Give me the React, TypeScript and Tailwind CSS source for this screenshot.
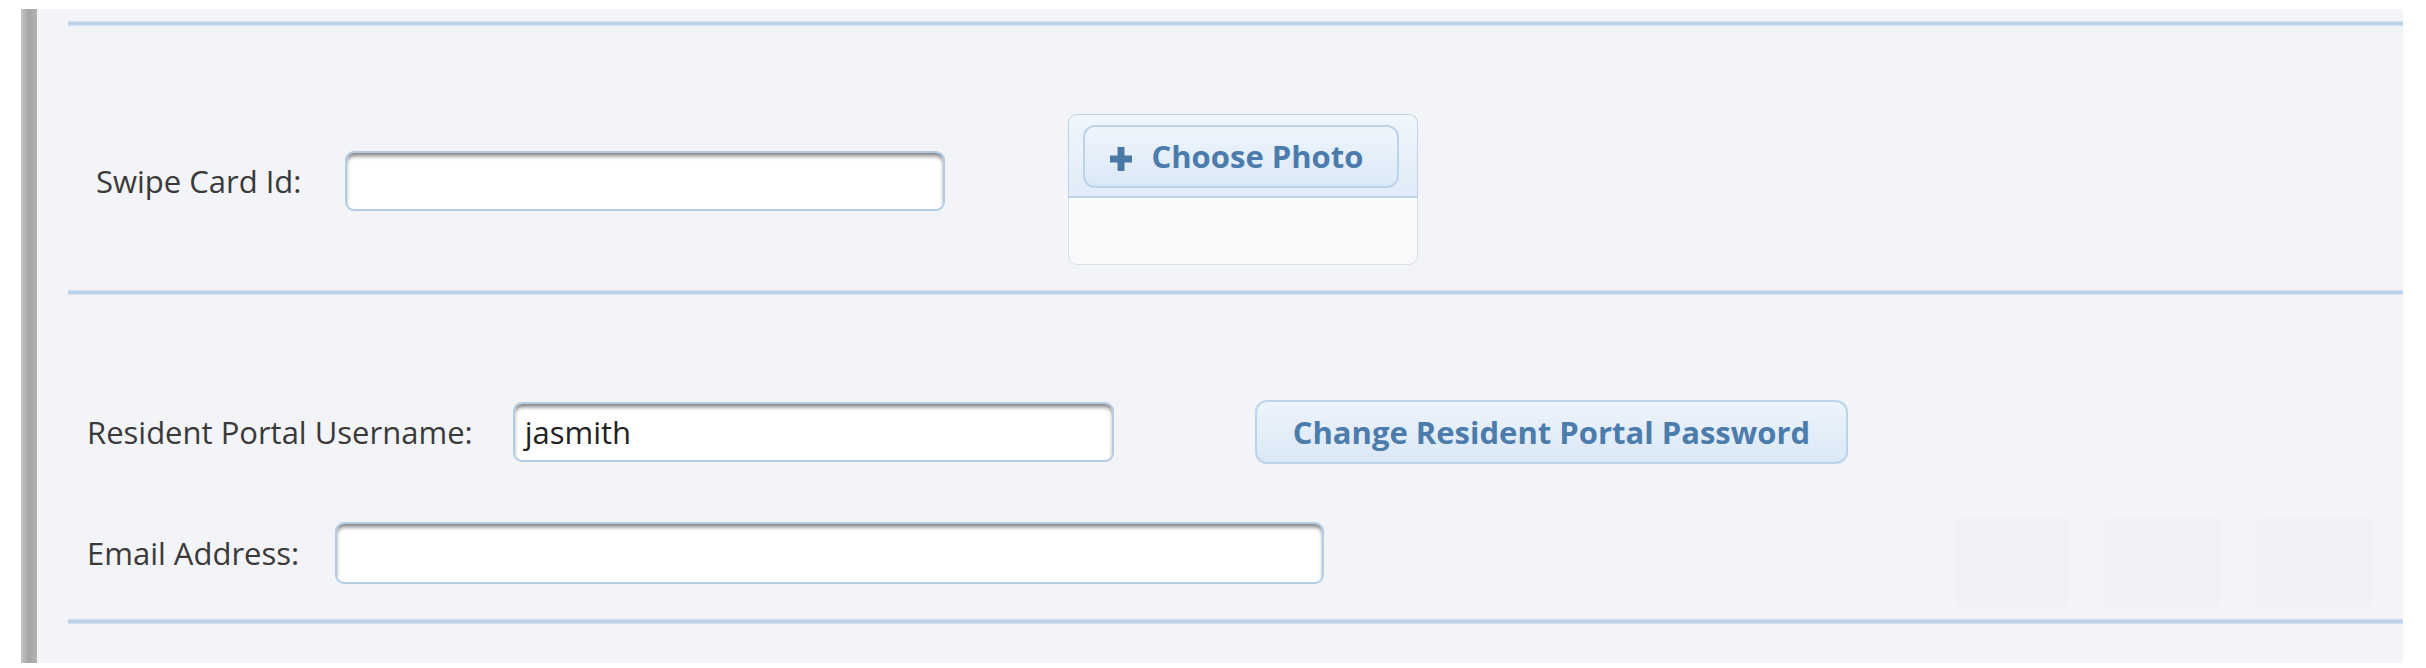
import React from 'react';

function Rule() {
  return <div className="h-[5px] shrink-0 bg-gradient-to-b from-[#d6e3f1] via-[#b4cce7] to-[#d6e3f1]" />;
}

function Field({ value, width, height = 'h-[60px]' }: { value?: string; width: string; height?: string }) {
  return (
    <div
      className={`${width} ${height} shrink-0 rounded-[9px] border-2 border-[#b3cce6] bg-white pl-[10px] flex items-center shadow-[inset_0_4px_4px_-1px_rgba(0,0,0,0.5)]`}
    >
      <span className="text-[31px] leading-none text-[#222]">{value}</span>
    </div>
  );
}

function Label({ children }: { children: React.ReactNode }) {
  return <span className="shrink-0 text-[31px] leading-none text-[#3a3a3a] whitespace-nowrap">{children}</span>;
}

function PhotoPicker() {
  return (
    <div className="w-[350px] h-[151px] shrink-0 flex flex-col">
      <div className="h-[84px] rounded-t-[9px] border-x border-t border-[#bdd2e9] border-b-2 border-b-[#bcd3ea] bg-gradient-to-b from-[#f1f6fc] to-[#e0ecf8] pt-[10px] pl-[14px]">
        <button
          type="button"
          className="w-[316px] h-[63px] rounded-[12px] border-2 border-[#bdd3ea] bg-gradient-to-b from-[#eef5fc] via-[#e5effa] to-[#dae8f6] flex items-center pl-[25px]"
        >
          <svg width="22" height="24" viewBox="0 0 22 24" className="mr-[19px] mt-[4px]">
            <rect x="7.5" y="0" width="7" height="24" fill="#4a78a6" />
            <rect x="0" y="8.5" width="22" height="7" fill="#4a78a6" />
          </svg>
          <span className="text-[31px] leading-none font-bold text-[#4c7cab]">Choose Photo</span>
        </button>
      </div>
      <div className="flex-1 rounded-b-[9px] border-x border-b border-[#dcdfe3] bg-[#f8f9fb]" />
    </div>
  );
}

export default function App() {
  return (
    <div className="w-full h-[668px] bg-white pt-[9px] pl-[21px] pr-[23px] pb-[5px] font-['Open_Sans',sans-serif]">
      <div className="h-full flex bg-[#f3f4f7]">
        <div className="w-[16px] shrink-0 bg-gradient-to-r from-[#c6c6c6] via-[#a4a4a4] to-[#b4b4b4]" />
        <div className="flex-1 flex flex-col pl-[31px] pt-[12px]">
          <Rule />

          <div className="h-[264px] shrink-0 flex items-start pl-[28px] pt-[88px]">
            <div className="flex items-center mt-[37px]">
              <Label>Swipe Card Id:</Label>
              <div className="ml-[44px]">
                <Field width="w-[600px]" />
              </div>
            </div>
            <div className="ml-[123px]">
              <PhotoPicker />
            </div>
          </div>

          <Rule />

          <div className="h-[324px] shrink-0 flex flex-col pl-[19px] pt-[105px]">
            <div className="flex items-center h-[64px]">
              <Label>Resident Portal Username:</Label>
              <div className="ml-[40px]">
                <Field value="jasmith" width="w-[601px]" />
              </div>
              <button
                type="button"
                className="ml-[141px] h-[64px] px-[36px] rounded-[12px] border-2 border-[#bdd3ea] bg-gradient-to-b from-[#edf4fb] via-[#e4eef9] to-[#dae8f6] text-[31px] leading-none font-bold text-[#4c7cab] whitespace-nowrap"
              >
                Change Resident Portal Password
              </button>
            </div>

            <div className="flex items-start mt-[58px]">
              <div className="flex items-center h-[62px]">
                <Label>Email Address:</Label>
                <div className="ml-[36px]">
                  <Field width="w-[989px]" height="h-[62px]" />
                </div>
              </div>
              <div className="ml-auto mr-[30px] -mt-[6px] flex gap-[35px]">
                <div className="w-[114px] h-[93px] rounded-[10px] bg-[#f1f2f5]" />
                <div className="w-[117px] h-[93px] rounded-[10px] bg-[#f1f2f5]" />
                <div className="w-[117px] h-[93px] rounded-[10px] bg-[#f1f2f5]" />
              </div>
            </div>
          </div>

          <Rule />
        </div>
      </div>
    </div>
  );
}
